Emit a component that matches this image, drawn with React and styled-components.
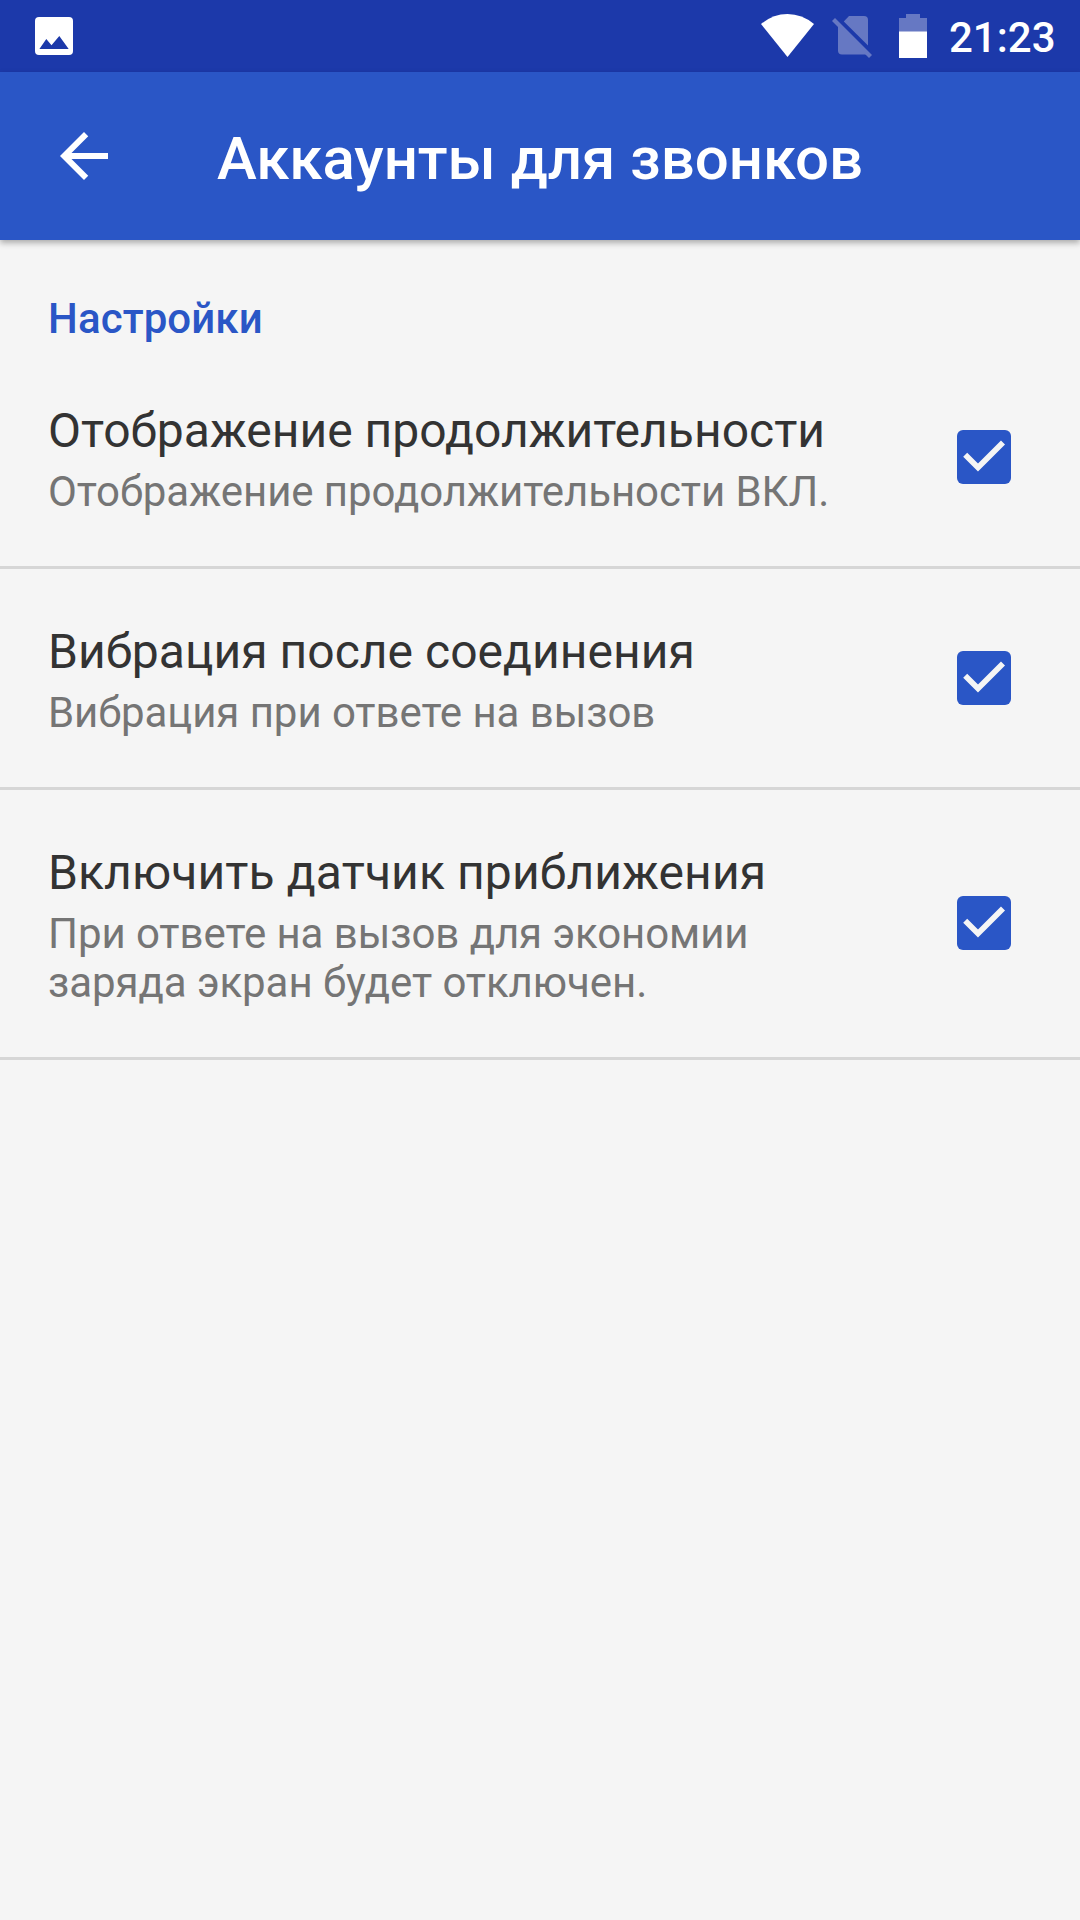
import { useState } from "react";
import styled, { createGlobalStyle } from "styled-components";

const GlobalStyle = createGlobalStyle`
  * {
    box-sizing: border-box;
  }
  body {
    margin: 0;
    background: #f5f5f5;
    font-family: Roboto, "Noto Sans", sans-serif;
  }
`;

const Screen = styled.div`
  width: 1080px;
  min-height: 1920px;
  background: #f5f5f5;
`;

const StatusBar = styled.div`
  display: flex;
  justify-content: space-between;
  align-items: flex-start;
  height: 72px;
  padding: 0 25px 0 35px;
  background: #1c39aa;
`;

const StatusIcons = styled.div`
  display: flex;
  align-items: flex-start;
`;

const StatusIcon = styled.svg`
  display: block;
  flex: none;
  width: ${(p) => p.$w}px;
  height: 72px;
`;

const Clock = styled.span`
  width: 106px;
  padding-top: 13px;
  color: #fff;
  font-size: 42px;
  font-weight: 500;
  line-height: 49px;
  white-space: nowrap;
`;

const AppBar = styled.header`
  display: flex;
  align-items: flex-start;
  position: relative;
  height: 168px;
  padding: 48px;
  background: #2a56c6;
  box-shadow: 0 3px 6px rgba(0, 0, 0, 0.3);
`;

const BackButton = styled.button`
  width: 72px;
  height: 72px;
  margin-right: 97px;
  padding: 0;
  border: none;
  background: none;
  cursor: pointer;

  svg {
    display: block;
  }
`;

const Title = styled.h1`
  margin: 3px 0 0;
  color: #fff;
  font-size: 60px;
  font-weight: 500;
  line-height: 71px;
  letter-spacing: -0.05px;
  white-space: nowrap;
`;

const SectionTitle = styled.h2`
  margin: 0;
  padding: 54px 48px 5px;
  color: #2a56c6;
  font-size: 42px;
  font-weight: 500;
  line-height: 49px;
  letter-spacing: 0.1px;
`;

const Row = styled.div`
  display: flex;
  align-items: center;
  justify-content: space-between;
  padding: 54px 69px 50px 48px;
  border-bottom: 3px solid #d6d6d6;
  cursor: pointer;
`;

const RowText = styled.div`
  width: 800px;
  margin-right: 24px;
`;

const RowTitle = styled.div`
  color: #333;
  font-size: 48px;
  line-height: 57px;
  letter-spacing: ${(p) => p.$tracking}px;
  white-space: nowrap;
`;

const RowSummary = styled.div`
  margin-top: 8px;
  color: #757575;
  font-size: 42px;
  line-height: 49px;
  letter-spacing: -0.07px;
  white-space: pre-line;
`;

const Box = styled.svg`
  display: block;
  flex: none;
  width: 54px;
  height: 54px;
  /* row padding is uneven, this centres the box on the whole row */
  margin-top: -4.5px;
`;

const settings = [
  {
    id: "duration",
    title: "Отображение продолжительности",
    summary: "Отображение продолжительности ВКЛ.",
    tracking: 0.03,
  },
  {
    id: "vibration",
    title: "Вибрация после соединения",
    summary: "Вибрация при ответе на вызов",
    tracking: 0.03,
  },
  {
    id: "proximity",
    title: "Включить датчик приближения",
    summary: "При ответе на вызов для экономии\nзаряда экран будет отключен.",
    tracking: 0.12,
  },
];

function Checkbox({ checked }) {
  return (
    <Box viewBox="0 0 54 54">
      {checked ? (
        <>
          <rect width="54" height="54" rx="6" fill="#2a56c6" />
          <path d="M8.2 24.700L21 37.500L46 12.500" fill="none" stroke="#f5f5f5" strokeWidth="5.7" />
        </>
      ) : (
        <rect x="3" y="3" width="48" height="48" rx="3" fill="none" stroke="#757575" strokeWidth="6" />
      )}
    </Box>
  );
}

function SettingRow({ title, summary, tracking }) {
  const [checked, setChecked] = useState(true);
  return (
    <Row onClick={() => setChecked(!checked)}>
      <RowText>
        <RowTitle $tracking={tracking}>{title}</RowTitle>
        <RowSummary>{summary}</RowSummary>
      </RowText>
      <Checkbox checked={checked} />
    </Row>
  );
}

function App() {
  return (
    <>
      <GlobalStyle />
      <Screen>
        <StatusBar>
          <StatusIcon $w={38} viewBox="0 0 38 72">
            <rect y="17" width="38" height="38" rx="4" fill="#fff" />
            <path d="M4.400 49L11.300 39L16.500 45.300L24.300 36L33.700 49Z" fill="#1c39aa" />
          </StatusIcon>
          <StatusIcons>
            {/* wifi, no sim, battery */}
            <StatusIcon $w={188} viewBox="761 0 188 72">
              <path d="M761 24Q773 14 787.500 14T814 24L787.500 57Z" fill="#fff" />
              <g fill="#6678c3">
                <path d="M849 16H864Q868 16 868 20V45.500L843.800 21.500Z" />
                <path d="M838 25L867 54.500H842Q838 54.500 838 50.500Z" />
                <path d="M832 21L835 18L872 55L869 58Z" />
                <path d="M906 14H920V18H927V32H899V18H906Z" />
              </g>
              <path d="M899 31.500H927V58H899Z" fill="#fff" />
            </StatusIcon>
            <Clock>21:23</Clock>
          </StatusIcons>
        </StatusBar>
        <AppBar>
          <BackButton aria-label="Назад">
            <svg width="72" height="72" viewBox="0 0 24 24" fill="#fff">
              <path d="M20 11H7.830l5.590-5.590L12 4l-8 8 8 8 1.410-1.410L7.830 13H20v-2z" />
            </svg>
          </BackButton>
          <Title>Аккаунты для звонков</Title>
        </AppBar>
        <SectionTitle>Настройки</SectionTitle>
        {settings.map((item) => (
          <SettingRow key={item.id} title={item.title} summary={item.summary} tracking={item.tracking} />
        ))}
      </Screen>
    </>
  );
}

export default App;
